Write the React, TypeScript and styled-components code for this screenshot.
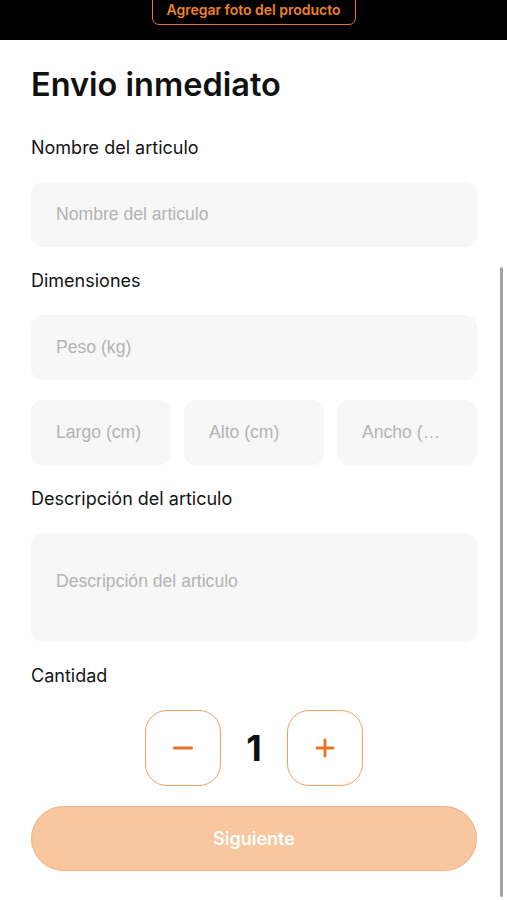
import React, { useState } from 'react';
import styled, { createGlobalStyle } from 'styled-components';

const GlobalStyle = createGlobalStyle`
  * { box-sizing: border-box; }
  body {
    margin: 0;
    background: #ffffff;
    font-family: 'Inter', 'Noto Sans', sans-serif;
    color: #111111;
  }
`;

const Page = styled.div`
  position: relative;
  width: 507px;
  height: 900px;
  overflow: hidden;
  background: #ffffff;
`;

const Header = styled.header`
  height: 40px;
  background: #000000;
  display: flex;
  justify-content: center;
  overflow: hidden;
`;

const PhotoButton = styled.button`
  margin-top: -12px;
  height: 37px;
  width: 204px;
  padding: 0;
  background: transparent;
  border: 1.5px solid #e8781f;
  border-radius: 7px;
  color: #f08222;
  font-family: 'Inter', sans-serif;
  font-weight: 600;
  font-size: 14px;
  display: flex;
  align-items: flex-end;
  justify-content: center;
  padding-bottom: 6px;
`;

const Content = styled.main`
  padding: 25px 30px 0 31px;
  display: flex;
  flex-direction: column;
`;

const Title = styled.h1`
  margin: 0 0 32px;
  font-size: 32.5px;
  line-height: 40px;
  font-weight: 600;
`;

const Field = styled.section`
  display: flex;
  flex-direction: column;
  margin-bottom: 23px;
`;

const Label = styled.label`
  font-size: 18px;
  line-height: 22px;
  font-weight: 400;
  margin-bottom: 23px;
  color: #141414;
`;

const Input = styled.input`
  width: 100%;
  height: 65px;
  border: none;
  outline: none;
  border-radius: 12px;
  background: #f7f7f7;
  padding: 0 28px 0 25px;
  font-family: 'Liberation Sans', Arial, sans-serif;
  font-size: 17.6px;
  color: #222;
  text-overflow: ellipsis;
  &::placeholder { color: #b3b3b3; }
`;

const TextArea = styled.textarea`
  width: 100%;
  height: 109px;
  border: none;
  outline: none;
  resize: none;
  border-radius: 12px;
  background: #f7f7f7;
  padding: 38px 25px 0;
  font-family: 'Liberation Sans', Arial, sans-serif;
  font-size: 17.6px;
  line-height: 20px;
  &::placeholder { color: #b3b3b3; }
`;

const DimRow = styled.div`
  margin-top: 20px;
  display: grid;
  grid-template-columns: repeat(3, 1fr);
  gap: 13px;
`;

const Stepper = styled.div`
  display: flex;
  justify-content: center;
  align-items: center;
  margin-bottom: 20px;
`;

const StepButton = styled.button`
  width: 76px;
  height: 76px;
  border-radius: 22px;
  border: 1.5px solid #eea264;
  background: #ffffff;
  display: flex;
  align-items: center;
  justify-content: center;
  padding: 0;
  cursor: pointer;
`;

const Count = styled.span`
  width: 66px;
  text-align: center;
  font-size: 36px;
  font-weight: 700;
  line-height: 40px;
`;

const NextButton = styled.button`
  width: 100%;
  height: 65px;
  border-radius: 33px;
  border: 1px solid #f2b081;
  background: #f8c7a0;
  color: #ffffff;
  font-family: 'Inter', sans-serif;
  font-size: 18px;
  font-weight: 600;
`;

const ScrollIndicator = styled.div`
  position: absolute;
  right: 4px;
  top: 267px;
  width: 3px;
  height: 630px;
  border-radius: 2px;
  background: #a3a3a3;
`;

const Minus = () => (
  <svg width="24" height="24" viewBox="0 0 24 24">
    <path d="M3.5 12h17" stroke="#e8731e" strokeWidth="3.2" strokeLinecap="round" />
  </svg>
);

const Plus = () => (
  <svg width="24" height="24" viewBox="0 0 24 24">
    <path d="M4 12h16M12 4v16" stroke="#e8731e" strokeWidth="2.8" strokeLinecap="round" />
  </svg>
);

export default function App() {
  const [qty, setQty] = useState(1);
  return (
    <Page>
      <GlobalStyle />
      <Header>
        <PhotoButton>Agregar foto del producto</PhotoButton>
      </Header>
      <Content>
        <Title>Envio inmediato</Title>
        <Field>
          <Label>Nombre del articulo</Label>
          <Input placeholder="Nombre del articulo" />
        </Field>
        <Field>
          <Label>Dimensiones</Label>
          <Input placeholder="Peso (kg)" />
          <DimRow>
            <Input placeholder="Largo (cm)" />
            <Input placeholder="Alto (cm)" />
            <Input placeholder="Ancho (cm)" />
          </DimRow>
        </Field>
        <Field>
          <Label>Descripción del articulo</Label>
          <TextArea placeholder="Descripción del articulo" />
        </Field>
        <Field style={{ marginBottom: 0 }}>
          <Label>Cantidad</Label>
          <Stepper>
            <StepButton onClick={() => setQty(Math.max(1, qty - 1))}>
              <Minus />
            </StepButton>
            <Count>{qty}</Count>
            <StepButton onClick={() => setQty(qty + 1)}>
              <Plus />
            </StepButton>
          </Stepper>
        </Field>
        <NextButton>Siguiente</NextButton>
      </Content>
      <ScrollIndicator />
    </Page>
  );
}
